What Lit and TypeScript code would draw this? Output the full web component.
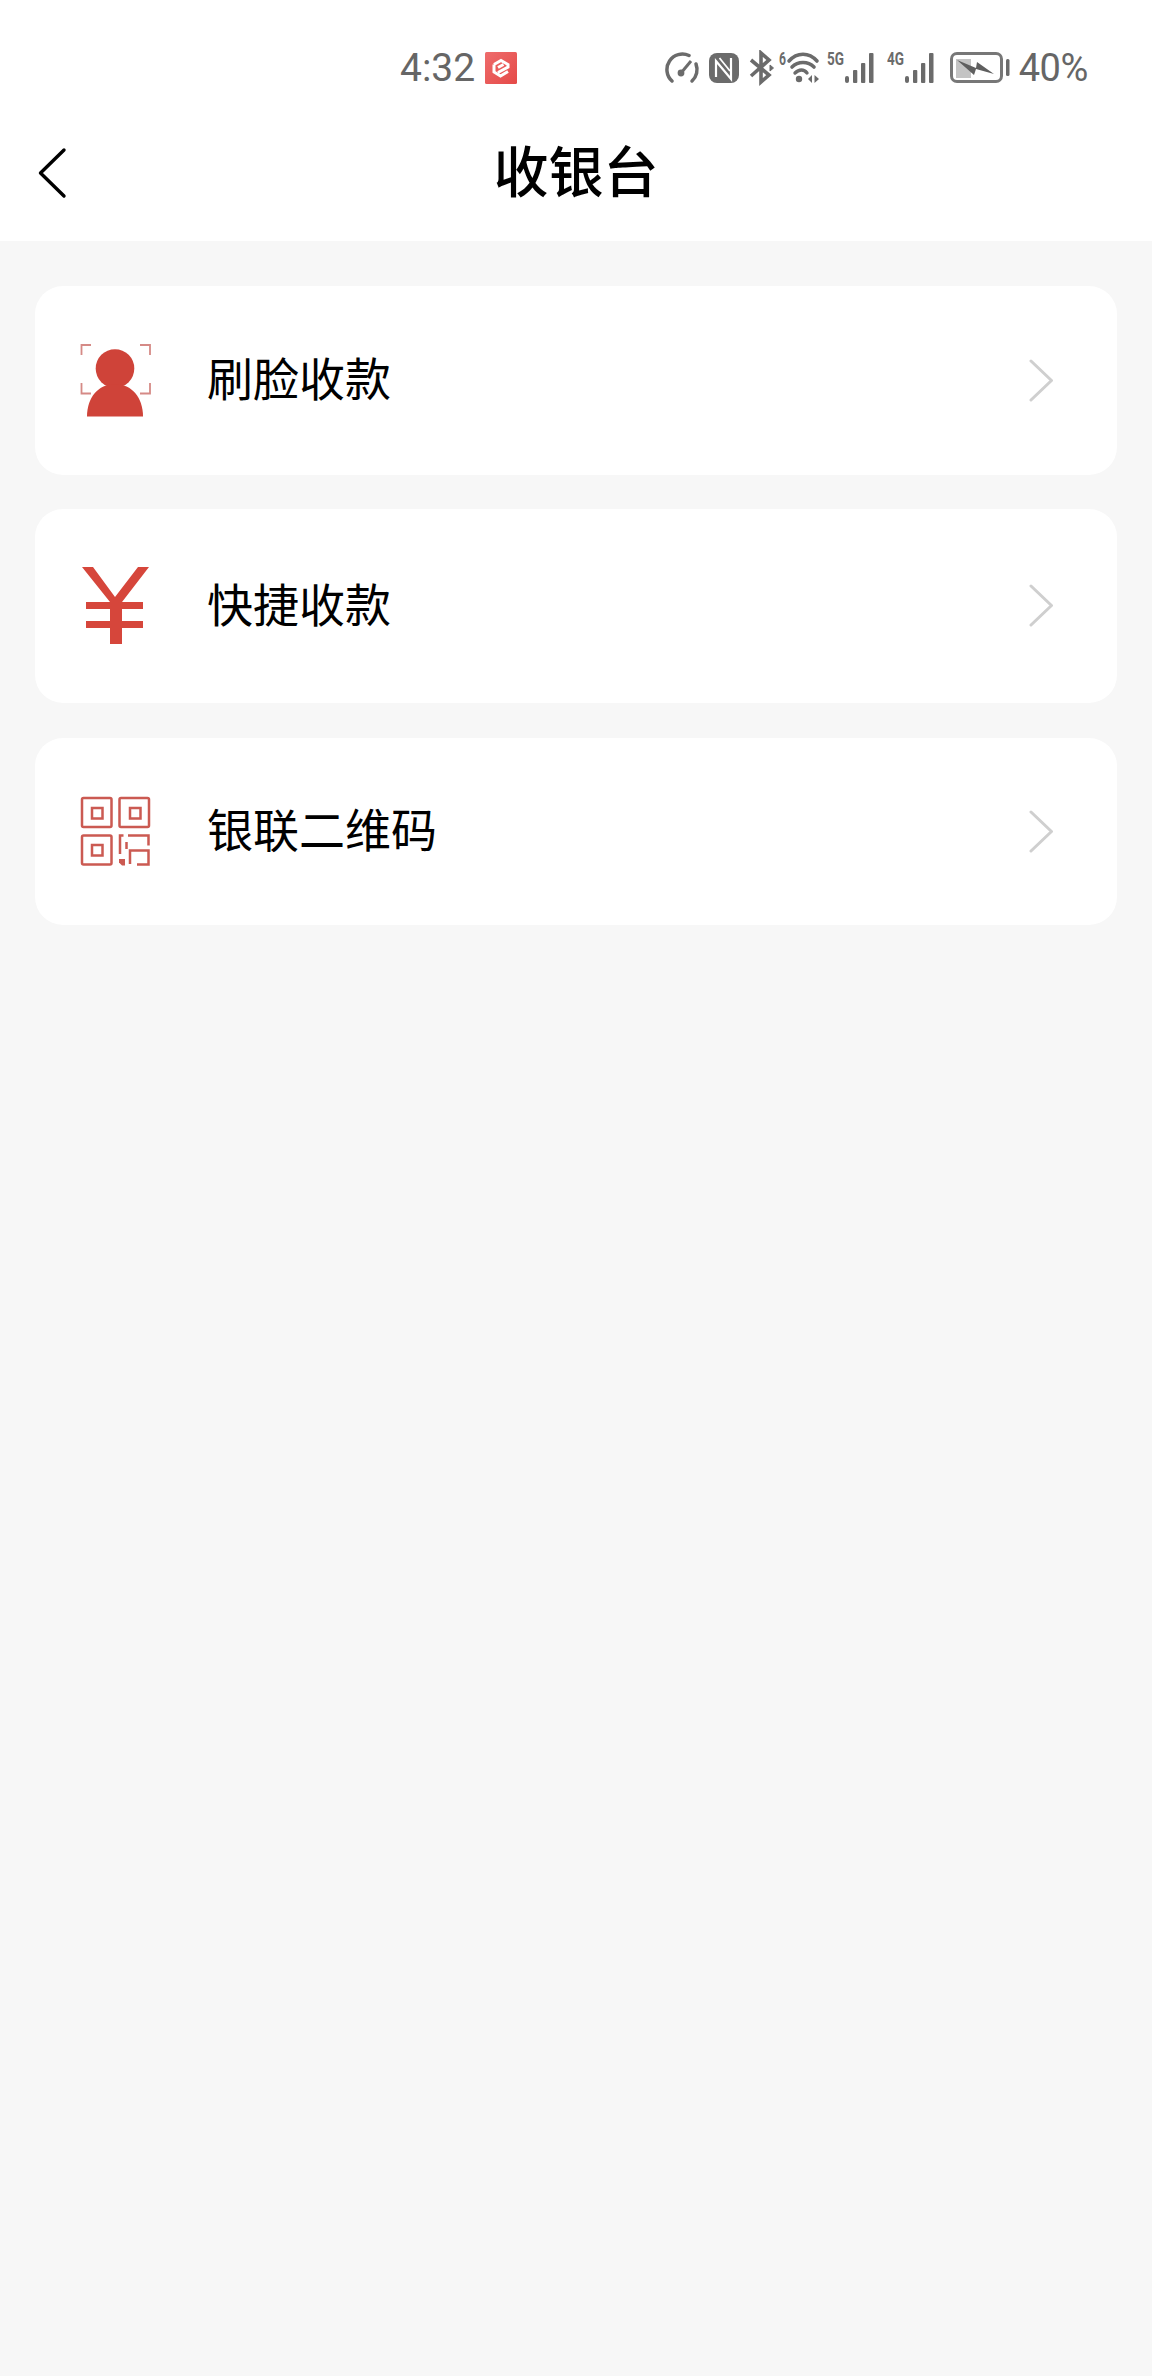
import { LitElement, html, css, svg } from "lit";
import { customElement } from "lit/decorators.js";

const faceIcon = svg`<svg class="ico" viewBox="0 0 72 84" width="72" height="84">
  <path d="M1.500 16 V6 H11 M60 6 H70 V16 M1.500 44 V54.500 H11 M60 54.500 H70 V44" fill="none" stroke="#d58a86" stroke-width="1.800"/>
  <circle cx="35" cy="29.500" r="19.300" fill="#cf4339"/>
  <path d="M7 77.500 C7 59 18 45 35 45 C52 45 63 59 63 77.500 Z" fill="#cf4339"/>
</svg>`;

const yenIcon = svg`<svg class="ico" viewBox="0 0 72 84" width="72" height="84">
  <path d="M2 3 H13 L35 33 L58 3 H69 L42 38 V80 H30 V38 Z" fill="#d6463b"/>
  <path d="M6 38 H63 V45 H6 Z M6 57 H63 V64 H6 Z" fill="#d6463b"/>
</svg>`;

const qrIcon = svg`<svg class="ico" viewBox="0 0 72 84" width="72" height="84">
  <g fill="none" stroke="#cb5a52" stroke-width="2.500">
    <rect x="2" y="8" width="29.500" height="29" rx="1.500"/>
    <rect x="39.500" y="8" width="29.500" height="29" rx="1.500"/>
    <rect x="2" y="45.500" width="29.500" height="29" rx="1.500"/>
    <rect x="12" y="18" width="10.500" height="10.500"/>
    <rect x="50" y="18" width="10.500" height="10.500"/>
    <rect x="12" y="55" width="10.500" height="10.500"/>
    <path d="M40 64 V45.500 H43.500 M48 45.500 H68.500 V55.500 M46.500 52 V59 M50 74 V60.500 H68.500 V74.500 H57"/>
  </g>
  <path d="M39 69 H45 V75.500 H42 L39 72.500 Z" fill="#cb5a52"/>
</svg>`;

const signal = svg`<g fill="#6b6b6b">
  <rect x="1" y="24" width="4" height="7" rx="2"/>
  <rect x="9" y="18" width="4.300" height="13" rx="1"/>
  <rect x="17" y="11" width="4.300" height="20" rx="1"/>
  <rect x="25" y="1" width="4.500" height="30" rx="1"/>
</g>`;

const items = [
  { label: "刷脸收款", icon: faceIcon, cls: "a" },
  { label: "快捷收款", icon: yenIcon, cls: "b" },
  { label: "银联二维码", icon: qrIcon, cls: "c" },
];

@customElement("app-root")
export class AppRoot extends LitElement {
  static styles = css`
    :host {
      display: block;
      width: 1152px;
      height: 2376px;
      background: #f7f7f7;
      font-family: "Noto Sans CJK SC", "Noto Sans", sans-serif;
      overflow: hidden;
    }
    .top { background: #fff; height: 241px; display: flex; flex-direction: column; }
    .status {
      height: 100px;
      display: flex;
      align-items: center;
      padding: 36px 64px 0 400px;
      box-sizing: border-box;
      color: #666;
      font-family: Roboto, "Noto Sans", sans-serif;
      font-size: 39px;
    }
    .time { line-height: 64px; }
    .badge { margin-left: 10px; display: block; }
    .icons { margin-left: auto; display: flex; align-items: center; }
    .icons svg { display: block; }
    .m-n { margin-left: 8px; }
    .m-bt { margin-left: 10px; }
    .m-wifi { margin-left: 3px; }
    .m-5g { margin-left: 2px; }
    .m-4g { margin-left: 10px; }
    .m-bat { margin-left: 13px; }
    .pct { margin-left: 9px; line-height: 64px; font-size: 38px; letter-spacing: -0.4px; }
    .nav { flex: 1; position: relative; display: flex; align-items: center; justify-content: center; padding-bottom: 6px; box-sizing: border-box; }
    .back { position: absolute; left: 36px; top: 45px; }
    .title { font-size: 55px; font-weight: 500; color: #000; line-height: 70px; }
    .list { display: flex; flex-direction: column; padding: 45px 35px 0; gap: 34px; }
    .card {
      background: #fff;
      border-radius: 28px;
      display: flex;
      align-items: center;
      padding: 0 62px 0 45px;
    }
    .card.a { height: 189px; }
    .card.b { height: 194px; }
    .card.c { height: 187px; margin-top: 1px; }
    .ico { display: block; flex: none; }
    .label { margin-left: 55px; padding-bottom: 9px; font-size: 46px; line-height: 60px; color: #000; flex: 1; font-weight: 400; }
    .chev { display: block; flex: none; }
  `;

  render() {
    return html`
      <div class="top">
        <div class="status">
          <span class="time">4:32</span>
          <svg class="badge" width="32" height="32" viewBox="0 0 32 32">
            <defs><linearGradient id="bg" x1="0" y1="0" x2="1" y2="1"><stop offset="0" stop-color="#ee6c6c"/><stop offset="1" stop-color="#e54a48"/></linearGradient></defs>
            <rect width="32" height="32" rx="1.500" fill="url(#bg)"/>
            <path d="M9 12.500 L16 8.500 L23 12.500 V15 L13 20.500 M9 12.500 V20 L15.500 24 L23 19.500 M13 15.500 L18.500 12.500" fill="none" stroke="#fff" stroke-width="3"/>
          </svg>
          <div class="icons">
            <svg width="36" height="32" viewBox="0 0 36 32" fill="none" stroke="#6b6b6b">
              <path d="M7 29 A15.500 15.500 0 0 1 24 3.500" stroke-width="3.500" stroke-linecap="round"/>
              <path d="M31 12 A15.500 15.500 0 0 1 27 29" stroke-width="3.500" stroke-linecap="round"/>
              <path d="M16 21 L26 9" stroke-width="3"/>
              <circle cx="16" cy="21" r="3.400" fill="#6b6b6b" stroke="none"/>
            </svg>
            <svg class="m-n" width="30" height="32" viewBox="0 0 30 32">
              <rect y="1" width="30" height="30" rx="8" fill="#6b6b6b"/>
              <path d="M7 25 V9 L22 27 V6" fill="none" stroke="#fff" stroke-width="2.200"/>
              <path d="M10.500 6 L21 19" fill="none" stroke="#fff" stroke-width="1.800"/>
            </svg>
            <svg class="m-bt" width="25" height="36" viewBox="0 0 25 36" fill="none" stroke="#6b6b6b" stroke-width="3.600">
              <path d="M2 10 L20 25 L12 32 V3 L20 10 L2 26"/>
              <path d="M21 15 L24.500 18 L21 21 Z" fill="#6b6b6b" stroke-width="1"/>
            </svg>
            <svg class="m-wifi" width="48" height="42" viewBox="0 -3 48 42" fill="none" stroke="#6b6b6b" stroke-linecap="round">
              <text x="2" y="15" font-size="18" font-weight="700" font-family="Roboto, sans-serif" fill="#6b6b6b" stroke="none" textLength="7" lengthAdjust="spacingAndGlyphs">6</text>
              <path d="M12 11 C20 2 32 2 40 11" stroke-width="3.600"/>
              <path d="M15 17 C21 11 31 11 37 17" stroke-width="3.600"/>
              <path d="M18 23 C22 19 27 19 30 23" stroke-width="3.400"/>
              <circle cx="22" cy="29" r="3.200" fill="#6b6b6b" stroke="none"/>
              <path d="M35 25 V33 L31 29 Z M37.500 25 V33 L42 29 Z" fill="#6b6b6b" stroke="none"/>
            </svg>
            <svg class="m-5g" width="50" height="42" viewBox="0 -4 50 42">
              <text x="0" y="14" font-size="18" font-weight="700" font-family="Roboto, sans-serif" fill="#6b6b6b" textLength="17" lengthAdjust="spacingAndGlyphs">5G</text>
              <g transform="translate(17 1)">${signal}</g>
            </svg>
            <svg class="m-4g" width="50" height="42" viewBox="0 -4 50 42">
              <text x="0" y="14" font-size="18" font-weight="700" font-family="Roboto, sans-serif" fill="#6b6b6b" textLength="17" lengthAdjust="spacingAndGlyphs">4G</text>
              <g transform="translate(17 1)">${signal}</g>
            </svg>
            <svg class="m-bat" width="60" height="32" viewBox="0 0 60 32">
              <rect x="1.500" y="1.500" width="50" height="28" rx="5.500" fill="none" stroke="#777" stroke-width="3"/>
              <rect x="6" y="7" width="15" height="19" fill="#c4c4c4"/>
              <path d="M7 8 L26 16 L27 10 L44 22 L26 17 L24 23 Z" fill="#5f5f5f"/>
              <rect x="56" y="7" width="3.500" height="17" rx="1.500" fill="#6b6b6b"/>
            </svg>
            <span class="pct">40%</span>
          </div>
        </div>
        <div class="nav">
          <svg class="back" width="34" height="54" viewBox="0 0 34 54">
            <path d="M28 5 L4.500 28 L28 51" fill="none" stroke="#000" stroke-width="3.400" stroke-linecap="round" stroke-linejoin="round"/>
          </svg>
          <span class="title">收银台</span>
        </div>
      </div>
      <div class="list">
        ${items.map(
          (it) => html`
            <div class="card ${it.cls}">
              ${it.icon}
              <span class="label">${it.label}</span>
              <svg class="chev" width="26" height="46" viewBox="0 0 26 46">
                <path d="M2 3 L22.500 22.500 L2 42" fill="none" stroke="#cfcfcf" stroke-width="3" stroke-linecap="round" stroke-linejoin="round"/>
              </svg>
            </div>
          `
        )}
      </div>
    `;
  }
}
